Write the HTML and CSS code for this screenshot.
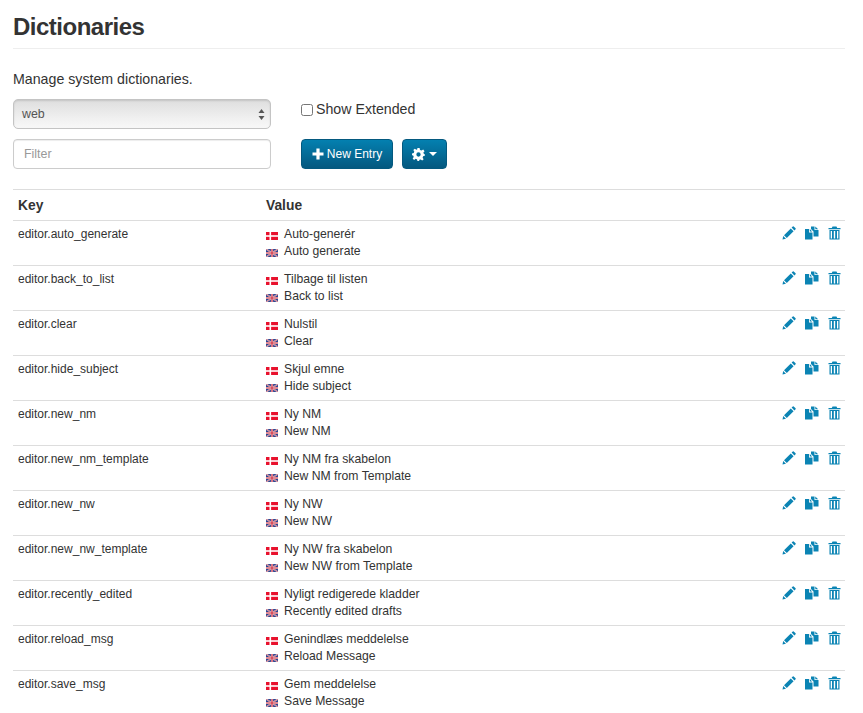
FILE: index.html
```html
<!DOCTYPE html>
<html lang="en">
<head>
    <meta charset="UTF-8">
    <meta name="viewport" content="width=device-width, initial-scale=1.0">
    <title>Dictionaries</title>
    <link rel="stylesheet" href="styles.css">
</head>
<body>
    <svg class="sprites" width="0" height="0">
        <symbol id="flag-da" viewBox="0 0 12 8">
            <rect width="12" height="8" fill="#e8112d"/>
            <rect x="3.5" width="1.6" height="8" fill="#fff"/>
            <rect y="3.2" width="12" height="1.6" fill="#fff"/>
        </symbol>
        <symbol id="flag-en" viewBox="0 0 12 8">
            <rect width="12" height="8" fill="#2f4590"/>
            <path d="M0 0L12 8M12 0L0 8" stroke="#e9dfe4" stroke-width="1.4"/>
            <path d="M0 0L12 8M12 0L0 8" stroke="#c8364a" stroke-width="0.6"/>
            <path d="M6 0V8M0 4H12" stroke="#f0e8ea" stroke-width="2.2"/>
            <path d="M6 0V8M0 4H12" stroke="#cf2a3e" stroke-width="1.2"/>
        </symbol>
        <symbol id="i-edit" viewBox="0 0 14 14">
            <path d="M0.5 13.5L1.2 10L4 12.8ZM2 9.2L8.8 2.4L11.6 5.2L4.8 12ZM9.6 1.6L10.8 0.4Q11.2 0.1 11.7 0.4L13.6 2.3Q13.9 2.8 13.6 3.2L12.4 4.4Z"/>
        </symbol>
        <symbol id="i-copy" viewBox="0 0 14 14">
            <path d="M0 3H4V6.5H7.5V13.5H0ZM4.8 3L7.2 5.6H4.8Z"/>
            <path d="M6 0.5H9.5V4H13.5V10.5H8.5V5.5L6 3ZM10.3 0.5L13.2 3.2H10.3Z"/>
        </symbol>
        <symbol id="i-trash" viewBox="0 0 13 14">
            <path d="M4.5 0.5H8.5L9.2 2H12.5V3.2H0.5V2H3.8ZM1.5 4H11.5V13.5H1.5ZM2.7 5V12.5H4V5ZM5.8 5V12.5H7.2V5ZM9 5V12.5H10.3V5Z" fill-rule="evenodd"/>
        </symbol>
    </svg>

    <div class="page">
        <h1 class="page-title">Dictionaries</h1>
        <p class="lead">Manage system dictionaries.</p>

        <div class="controls">
            <div class="controls-left">
                <div class="select-box">
                    <span>web</span>
                    <svg class="select-arrows" width="7" height="11" viewBox="0 0 7 11"><path d="M3.5 0L6.5 4H0.5ZM3.5 11L0.5 7H6.5Z"/></svg>
                </div>
                <input class="filter-input" type="text" placeholder="Filter">
            </div>
            <div class="controls-right">
                <label class="extended"><input type="checkbox"> Show Extended</label>
                <div class="actions">
                    <button class="btn btn-new">
                        <svg width="12" height="12" viewBox="0 0 12 12"><path d="M4.4 0.5H7.6V4.4H11.5V7.6H7.6V11.5H4.4V7.6H0.5V4.4H4.4Z" fill="#fff"/></svg>
                        New Entry
                    </button>
                    <button class="btn btn-gear">
                        <svg width="13" height="13" viewBox="0 0 24 24"><path fill="#fff" fill-rule="evenodd" d="M10 0H14L14.8 3.6 17.6 4.8 20.7 2.8 23.2 5.8 21 8.5 22 11 24 12V14L20.6 15 19.6 17.8 21.5 20.8 18.8 23 16 21 13.8 21.8 13 24H10L9.4 21 6.8 20 3.8 22 1.2 19.2 3.2 16.4 2.2 14 0 13.6V10L3.2 9.2 4.2 6.6 2.4 3.6 5.2 1.2 8 3.2 9.6 2.6ZM12 8A4 4 0 1 0 12 16 4 4 0 1 0 12 8Z"/></svg>
                        <span class="caret"></span>
                    </button>
                </div>
            </div>
        </div>

        <table class="dict-table">
            <thead>
                <tr>
                    <th class="col-key">Key</th>
                    <th>Value</th>
                    <th class="col-tools"></th>
                </tr>
            </thead>
            <tbody id="rows"></tbody>
        </table>
    </div>

    <script>
        const entries = [
            ["editor.auto_generate", "Auto-generér", "Auto generate"],
            ["editor.back_to_list", "Tilbage til listen", "Back to list"],
            ["editor.clear", "Nulstil", "Clear"],
            ["editor.hide_subject", "Skjul emne", "Hide subject"],
            ["editor.new_nm", "Ny NM", "New NM"],
            ["editor.new_nm_template", "Ny NM fra skabelon", "New NM from Template"],
            ["editor.new_nw", "Ny NW", "New NW"],
            ["editor.new_nw_template", "Ny NW fra skabelon", "New NW from Template"],
            ["editor.recently_edited", "Nyligt redigerede kladder", "Recently edited drafts"],
            ["editor.reload_msg", "Genindlæs meddelelse", "Reload Message"],
            ["editor.save_msg", "Gem meddelelse", "Save Message"]
        ];

        function icon(name, w, h) {
            return `<svg class="tool" width="${w}" height="${h}"><use href="#${name}"/></svg>`;
        }

        function flagLine(flag, text) {
            return `<div class="value-line"><svg class="flag" width="12" height="8"><use href="#${flag}"/></svg>${text}</div>`;
        }

        document.getElementById("rows").innerHTML = entries.map(([key, da, en]) => `
            <tr>
                <td class="key-cell">${key}</td>
                <td class="value-cell">${flagLine("flag-da", da)}${flagLine("flag-en", en)}</td>
                <td class="col-tools">${icon("i-edit", 14, 14)}${icon("i-copy", 14, 14)}${icon("i-trash", 13, 14)}</td>
            </tr>`).join("");
    </script>
</body>
</html>
```

FILE: styles.css
```css
body {
    font-family: "Liberation Sans", Arial, sans-serif;
    font-size: 14px;
    color: #333;
    margin: 0;
    background-color: #fff;
    overflow: hidden;
}
.sprites {
    position: absolute;
}
.page {
    padding: 0 18px 0 13px;
}
.page-title {
    font-size: 24px;
    letter-spacing: -0.5px;
    line-height: 30px;
    font-weight: bold;
    margin: 0;
    padding: 12px 0 6px;
    border-bottom: 1px solid #eee;
}
.lead {
    margin: 0;
    padding-top: 20px;
    line-height: 20px;
    font-size: 14.2px;
}
.controls {
    display: flex;
    gap: 30px;
    margin-top: 10px;
    padding-bottom: 20px;
    border-bottom: 1px solid #ddd;
}
.controls-left {
    display: flex;
    flex-direction: column;
    gap: 10px;
    width: 258px;
}
.select-box {
    position: relative;
    display: flex;
    align-items: center;
    box-sizing: border-box;
    height: 30px;
    padding-left: 8px;
    font-size: 12.4px;
    color: #555;
    border: 1px solid #c4c4c4;
    border-radius: 5px;
    background: linear-gradient(to bottom, #dedede, #f0f0f0 65%, #f8f8f8);
    box-shadow: inset 0 1px 2px rgba(0, 0, 0, 0.12);
}
.select-arrows {
    position: absolute;
    right: 5px;
    top: 9px;
    fill: #555;
}
.filter-input {
    box-sizing: border-box;
    height: 30px;
    padding: 0 10px;
    font-family: inherit;
    font-size: 12.4px;
    border: 1px solid #ccc;
    border-radius: 4px;
    box-shadow: inset 0 1px 1px rgba(0, 0, 0, 0.075);
}
.filter-input::placeholder {
    color: #999;
}
.controls-right {
    display: flex;
    flex-direction: column;
    gap: 20px;
}
.extended {
    display: flex;
    align-items: center;
    gap: 3px;
    height: 20px;
    font-size: 14.2px;
}
.extended input {
    margin: 1px 0 0;
    width: 12px;
    height: 12px;
}
.actions {
    display: flex;
    gap: 9px;
}
.btn {
    display: flex;
    align-items: center;
    justify-content: center;
    box-sizing: border-box;
    height: 30px;
    color: #fff;
    font-family: inherit;
    font-size: 12px;
    border: 1px solid #04597f;
    border-radius: 4px;
    background: linear-gradient(to bottom, #0480b0, #04587f);
    cursor: pointer;
}
.btn-new {
    width: 92px;
    gap: 3px;
    padding: 0;
}
.btn-gear {
    width: 45px;
    gap: 4px;
    padding: 0;
}
.caret {
    border-top: 4px solid #fff;
    border-left: 4px solid transparent;
    border-right: 4px solid transparent;
}
.dict-table {
    border-collapse: collapse;
    width: 100%;
    font-size: 12px;
}
.dict-table th {
    text-align: left;
    font-size: 13.8px;
    height: 30px;
    padding: 2px 5px 0;
    box-sizing: border-box;
}
.dict-table td {
    border-top: 1px solid #ddd;
    padding: 5px 5px 5px;
    height: 45px;
    box-sizing: border-box;
    vertical-align: top;
}
.col-key {
    width: 248px;
}
.dict-table .key-cell {
    line-height: 17px;
}
.dict-table .value-cell {
    font-size: 12.2px;
}
.dict-table .col-tools {
    text-align: right;
    padding: 4px 4px 5px 5px;
    width: 80px;
    white-space: nowrap;
}
.value-line {
    line-height: 17px;
}
.flag {
    margin-right: 6px;
    vertical-align: -2px;
}
.tool {
    fill: #0b84b4;
    margin-left: 9px;
    margin-top: 1px;
}
```
